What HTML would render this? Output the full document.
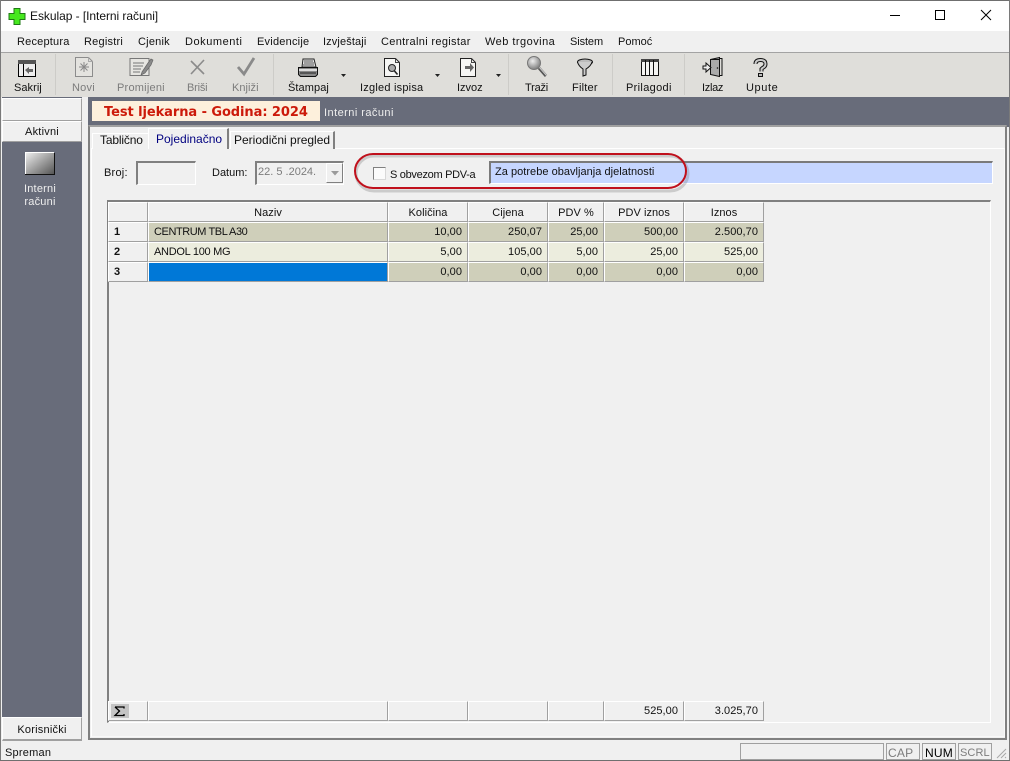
<!DOCTYPE html>
<html><head><meta charset="utf-8"><style>
html,body{margin:0;padding:0;background:#f0f0f0}
#w{position:relative;width:1010px;height:761px;overflow:hidden;font:11px/14px "Liberation Sans",sans-serif;color:#000;background:#f0f0f0}
#w div{position:absolute;box-sizing:border-box}
.t{position:absolute;white-space:nowrap;letter-spacing:.22px;color:#111}
.g{color:#7c7c7c}
.c{text-align:center}
.cell{position:absolute;box-sizing:border-box;height:20px;border-right:1px solid #a0a0a0;border-bottom:1px solid #a0a0a0;border-left:1px solid #fff;border-top:1px solid #fff;padding:0 5px;line-height:19px;white-space:nowrap;letter-spacing:.05px;color:#111}
.r{text-align:right}
.h{text-align:center;background:#f0f0f0;line-height:20px}
.y{background:#cfcfba}.l{background:#ecedde}.b{background:#0078d7}
svg{position:absolute;left:0;top:0}
</style></head><body><div id="w">
<div style="left:0;top:1px;width:1010px;height:30px;background:#fff"></div>
<div style="left:0;top:31px;width:1010px;height:21px;background:#f0f0f0"></div>
<div style="left:0;top:52px;width:1010px;height:1px;background:#a3a3a3"></div>
<div style="left:0;top:53px;width:1010px;height:44px;background:#dfdeda"></div>
<div style="left:88px;top:97px;width:922px;height:30px;background:#686c7a"></div>
<div style="left:2px;top:97px;width:80px;height:644px;background:#686c7a"></div>
<div style="left:2px;top:98px;width:80px;height:23px;background:#f0f0f0;border:1px solid #fff;border-right-color:#a0a0a0;border-bottom-color:#a0a0a0"></div>
<div style="left:2px;top:121px;width:80px;height:21px;background:#f0f0f0;border:1px solid #fff;border-right-color:#a0a0a0;border-bottom-color:#a0a0a0"></div>
<div style="left:2px;top:717px;width:80px;height:24px;background:#f0f0f0;border:1px solid #fff;border-right-color:#a0a0a0;border-bottom:2px solid #a0a0a0"></div>
<div style="left:92px;top:101px;width:228px;height:20px;background:#fdf0dc"></div>
<div style="left:88px;top:125px;width:919px;height:615px;background:#f0f0f0;border:2px solid #808080;border-top-color:#a0a0a0"></div>
<div style="left:91px;top:148px;width:914px;height:589px;border:1px solid #fff;border-right-color:#f8f8f8;border-bottom-color:#f8f8f8"></div>
<div style="left:92px;top:133px;width:56px;height:16px;background:#f0f0f0;border:1px solid #fff;border-right:0;border-bottom:0"></div>
<div style="left:148px;top:128px;width:81px;height:21px;background:#f0f0f0;border:1px solid #fff;border-right:2px solid #808080;border-bottom:0"></div>
<div style="left:230px;top:131px;width:105px;height:18px;background:#f0f0f0;border:1px solid #fff;border-right:2px solid #808080;border-bottom:0"></div>

<div style="left:136px;top:161px;width:60px;height:24px;background:#f0f0f0;border:2px solid #808080;border-right:1px solid #fff;border-bottom:1px solid #fff"></div>
<div style="left:255px;top:161px;width:89px;height:24px;background:#f0f0f0;border:2px solid #808080;border-right:1px solid #fff;border-bottom:1px solid #fff"></div>
<div style="left:326px;top:163px;width:17px;height:20px;background:#f0f0f0;border:1px solid #fff;border-right-color:#808080;border-bottom-color:#808080"></div>
<div style="left:373px;top:167px;width:13px;height:13px;background:#fbfbfb;border:1px solid #808080;border-right-color:#d8d8d8;border-bottom-color:#d8d8d8"></div>
<div style="left:489px;top:161px;width:504px;height:23px;background:#c6d6ff;border:2px solid #7a7a7a;border-right:1px solid #fff;border-bottom:1px solid #fff"></div>

<div style="left:107px;top:200px;width:884px;height:523px;background:#f0f0f0;border:2px solid #808080;border-right:1px solid #fff;border-bottom:1px solid #fff"></div>

<div class="cell h" style="left:108px;top:202px;width:40px"></div>
<div class="cell h" style="left:148px;top:202px;width:240px">Naziv</div>
<div class="cell h" style="left:388px;top:202px;width:80px">Količina</div>
<div class="cell h" style="left:468px;top:202px;width:80px">Cijena</div>
<div class="cell h" style="left:548px;top:202px;width:56px">PDV %</div>
<div class="cell h" style="left:604px;top:202px;width:80px">PDV iznos</div>
<div class="cell h" style="left:684px;top:202px;width:80px">Iznos</div>

<div class="cell" style="left:108px;top:222px;width:40px;font-weight:bold;background:#f0f0f0">1</div>
<div class="cell y" style="left:148px;top:222px;width:240px;letter-spacing:-.42px">CENTRUM TBL A30</div>
<div class="cell y r" style="left:388px;top:222px;width:80px">10,00</div>
<div class="cell y r" style="left:468px;top:222px;width:80px">250,07</div>
<div class="cell y r" style="left:548px;top:222px;width:56px">25,00</div>
<div class="cell y r" style="left:604px;top:222px;width:80px">500,00</div>
<div class="cell y r" style="left:684px;top:222px;width:80px">2.500,70</div>

<div class="cell" style="left:108px;top:242px;width:40px;font-weight:bold;background:#f0f0f0">2</div>
<div class="cell l" style="left:148px;top:242px;width:240px;letter-spacing:-.28px">ANDOL 100 MG</div>
<div class="cell l r" style="left:388px;top:242px;width:80px">5,00</div>
<div class="cell l r" style="left:468px;top:242px;width:80px">105,00</div>
<div class="cell l r" style="left:548px;top:242px;width:56px">5,00</div>
<div class="cell l r" style="left:604px;top:242px;width:80px">25,00</div>
<div class="cell l r" style="left:684px;top:242px;width:80px">525,00</div>

<div class="cell" style="left:108px;top:262px;width:40px;font-weight:bold;background:#f0f0f0">3</div>
<div class="cell b" style="left:148px;top:262px;width:240px"></div>
<div class="cell y r" style="left:388px;top:262px;width:80px">0,00</div>
<div class="cell y r" style="left:468px;top:262px;width:80px">0,00</div>
<div class="cell y r" style="left:548px;top:262px;width:56px">0,00</div>
<div class="cell y r" style="left:604px;top:262px;width:80px">0,00</div>
<div class="cell y r" style="left:684px;top:262px;width:80px">0,00</div>

<div class="cell h" style="left:108px;top:701px;width:40px"></div>
<div class="cell h" style="left:148px;top:701px;width:240px"></div>
<div class="cell h" style="left:388px;top:701px;width:80px"></div>
<div class="cell h" style="left:468px;top:701px;width:80px"></div>
<div class="cell h" style="left:548px;top:701px;width:56px"></div>
<div class="cell r" style="left:604px;top:701px;width:80px;background:#f0f0f0">525,00</div>
<div class="cell r" style="left:684px;top:701px;width:80px;background:#f0f0f0">3.025,70</div>
<div style="left:111px;top:704px;width:18px;height:14px;background:#c4c4c4"></div>

<div style="left:740px;top:743px;width:144px;height:17px;border:1px solid #a0a0a0"></div>
<div style="left:886px;top:743px;width:34px;height:17px;border:1px solid #a0a0a0"></div>
<div style="left:922px;top:743px;width:34px;height:17px;border:1px solid #a0a0a0"></div>
<div style="left:958px;top:743px;width:34px;height:17px;border:1px solid #a0a0a0"></div>

<svg width="1010" height="761" viewBox="0 0 1010 761" fill="none">
<defs>
<linearGradient id="bg" x1="0" y1="0" x2="1" y2="1"><stop offset="0" stop-color="#f2f2f2"/><stop offset="1" stop-color="#555"/></linearGradient>
<radialGradient id="lens" cx=".4" cy=".35" r=".7"><stop offset="0" stop-color="#eee"/><stop offset="1" stop-color="#777"/></radialGradient>
</defs>
<rect x="0" y="0" width="1010" height="1" fill="#6f6f6f"/>
<rect x="0" y="0" width="1" height="761" fill="#7a7a7a"/>
<rect x="1009" y="0" width="1" height="761" fill="#7a7a7a"/>
<rect x="0" y="760" width="1010" height="1" fill="#6f6f6f"/>
<path d="M14 8.500h6v5h5v6h-5v5h-6v-5h-5v-6h5z" fill="#46e81e" stroke="#1f7a14"/>
<path d="M890 15.500h10" stroke="#000"/>
<rect x="935.500" y="10.500" width="9" height="9" stroke="#000"/>
<path d="M981 10l10 10M991 10l-10 10" stroke="#000"/>
<g fill="#cdccc8"><rect x="55" y="54" width="1" height="41"/><rect x="273" y="54" width="1" height="41"/><rect x="508" y="54" width="1" height="41"/><rect x="612" y="54" width="1" height="41"/><rect x="684" y="54" width="1" height="41"/></g>
<g fill="#222"><path d="M341 74h5l-2.500 3z"/><path d="M435 74h5l-2.500 3z"/><path d="M496 74h5l-2.500 3z"/></g>
<g shape-rendering="crispEdges"><rect x="18.500" y="60.500" width="17" height="16" fill="#eee" stroke="#000"/><rect x="18" y="60" width="18" height="4" fill="#555"/><rect x="23" y="64" width="1" height="12" fill="#000"/></g>
<path d="M25 70l4-3v2h4v3h-4v2z" fill="#666"/>
<path d="M75.500 57.500h13l4 4v15h-17z" fill="#e4e3df" stroke="#8c8c8c"/><path d="M88.500 57.500v4h4" stroke="#aaa"/>
<path d="M84 62v10M79 67h10M80.500 63.500l7 7M87.500 63.500l-7 7" stroke="#8a8a8a"/>
<rect x="130" y="58.500" width="19" height="17" fill="#e6e5e1" stroke="#777"/>
<path d="M133 63h11M133 66h10M133 69h8M133 72h7" stroke="#777"/>
<path d="M142 72l6-9 3-4 2 1-2 5-6 8-4 2z" fill="#8a8a8a" stroke="#666" stroke-width=".7"/>
<path d="M191 61l13 13M204 60l-13 14" stroke="#8b8b8b" stroke-width="1.600"/>
<path d="M238 67l6 7 10-16" stroke="#8a8a8a" stroke-width="2.800"/>
<path d="M303 59h11l2 8h-14z" fill="#e6e6e6" stroke="#222"/>
<path d="M304 61h9M304 63h10M303 65h11" stroke="#555"/>
<path d="M298.500 67.500h19v7l-2 2h-15l-2-2z" fill="#8a8a8a" stroke="#111"/>
<path d="M299 70h18" stroke="#ddd" stroke-width="2"/><path d="M300 73h16" stroke="#222"/>
<path d="M384.500 58.500h11l4 4v14h-15z" fill="#f6f6f4" stroke="#222"/><path d="M395.500 58.500v4h4" stroke="#444"/>
<circle cx="392" cy="68" r="3.500" fill="#aaa" stroke="#222"/><path d="M394.500 71l3 3.500" stroke="#222" stroke-width="1.600"/>
<path d="M460.500 58.500h11l4 4v14h-15z" fill="#f6f6f4" stroke="#222"/><path d="M471.500 58.500v4h4" stroke="#444"/>
<path d="M465 66h5v-3l4 4.500-4 4.500v-3h-5z" fill="#666"/>
<circle cx="534" cy="63" r="6.500" fill="url(#lens)" stroke="#777"/><path d="M539 68l7 8" stroke="#555" stroke-width="3"/><path d="M539.500 67.500l7 8" stroke="#ccc" stroke-width="1"/>
<ellipse cx="585" cy="62" rx="7.500" ry="3" fill="#bbb" stroke="#111"/><path d="M577.500 62q1 4 5.500 7v7l3-1v-6q5-3 6-7" fill="#ccc" stroke="#111"/>
<g shape-rendering="crispEdges"><rect x="641.500" y="59.500" width="17" height="16" fill="#f4f4f2" stroke="#111"/><rect x="641" y="59" width="18" height="3" fill="#444"/><path d="M645.500 60v15M649.500 60v15M653.500 60v15" stroke="#111"/></g>
<path d="M710.500 59.500l9-2v19l-9-2z" fill="#aaa" stroke="#111"/>
<path d="M719.500 58.500h2.500v17h-2.500M710.500 59.500h9" stroke="#111" fill="none"/>
<path d="M703 66h3v-3l5 4.500-5 4.500v-3h-3z" fill="#eee" stroke="#111"/>
<circle cx="717.500" cy="68" r=".8" fill="#111"/>
<path d="M755.500 64q0-4 5-4t5 4q0 2.500-3 4l-1 1v2.500" stroke="#111" stroke-width="4"/>
<path d="M755.500 64q0-4 5-4t5 4q0 2.500-3 4l-1 1v2.500" stroke="#c9c9c9" stroke-width="2"/>
<rect x="758.500" y="73.500" width="4" height="3" fill="#bbb" stroke="#111"/>
<rect x="25" y="153" width="30" height="22" fill="#111"/><rect x="25" y="152" width="29" height="22" fill="url(#bg)"/><rect x="25" y="152" width="29" height="1" fill="#fff"/><rect x="25" y="152" width="1" height="22" fill="#fff"/>
<path d="M331 171h8l-4 4.500z" fill="#9a9a9a"/>
<rect x="356" y="156" width="332" height="35" rx="18" stroke="#777" stroke-width="3" opacity=".3"/>
<rect x="355" y="154" width="331" height="34" rx="18" stroke="#c0101c" stroke-width="2"/>
<path d="M1006 749l-9 9M1006 753l-5 5M1006 757l-1 1" stroke="#a8a8a8"/>
<path d="M115 707h9v1.500M115 707l4.500 4-4.500 4.500h9v-1.500" stroke="#000" stroke-width="1.300"/>
</svg>

<span class="t" style="left:30px;top:9px;font-size:12px;letter-spacing:-.05px">Eskulap - [Interni računi]</span>
<span class="t" style="left:17px;top:35px;letter-spacing:.2px">Receptura</span>
<span class="t" style="left:84px;top:35px">Registri</span>
<span class="t" style="left:138px;top:35px">Cjenik</span>
<span class="t" style="left:185px;top:35px;letter-spacing:.55px">Dokumenti</span>
<span class="t" style="left:257px;top:35px">Evidencije</span>
<span class="t" style="left:323px;top:35px;letter-spacing:.12px">Izvještaji</span>
<span class="t" style="left:381px;top:35px;letter-spacing:.33px">Centralni registar</span>
<span class="t" style="left:485px;top:35px;letter-spacing:.47px">Web trgovina</span>
<span class="t" style="left:570px;top:35px;letter-spacing:-.1px">Sistem</span>
<span class="t" style="left:618px;top:35px;letter-spacing:0">Pomoć</span>

<span class="t" style="left:14px;top:81px;letter-spacing:.05px">Sakrij</span>
<span class="t g" style="left:72px;top:81px">Novi</span>
<span class="t g" style="left:117px;top:81px">Promijeni</span>
<span class="t g" style="left:187px;top:81px;letter-spacing:-.2px">Briši</span>
<span class="t g" style="left:232px;top:81px;letter-spacing:.05px">Knjiži</span>
<span class="t" style="left:288px;top:81px;letter-spacing:.08px">Štampaj</span>
<span class="t" style="left:360px;top:81px">Izgled ispisa</span>
<span class="t" style="left:457px;top:81px;letter-spacing:0">Izvoz</span>
<span class="t" style="left:525px;top:81px;letter-spacing:-.2px">Traži</span>
<span class="t" style="left:572px;top:81px">Filter</span>
<span class="t" style="left:626px;top:81px;letter-spacing:.33px">Prilagodi</span>
<span class="t" style="left:702px;top:81px;letter-spacing:-.3px">Izlaz</span>
<span class="t" style="left:746px;top:81px;letter-spacing:.6px">Upute</span>

<span class="t" style="left:104px;top:104px;font:bold 13px/17px 'DejaVu Sans',sans-serif;letter-spacing:-.07px;color:#cc1a0a">Test ljekarna - Godina: 2024</span>
<span class="t" style="left:324px;top:106px;letter-spacing:.45px;color:#eee">Interni računi</span>
<span class="t c" style="left:2px;top:125px;width:80px">Aktivni</span>
<span class="t c" style="left:2px;top:182px;width:76px;color:#eee">Interni</span>
<span class="t c" style="left:2px;top:195px;width:76px;color:#eee">računi</span>
<span class="t c" style="left:2px;top:723px;width:80px">Korisnički</span>

<span class="t" style="left:100px;top:133px;font-size:12px;letter-spacing:-.15px">Tablično</span>
<span class="t" style="left:156px;top:132px;font-size:12px;letter-spacing:0;color:#000080">Pojedinačno</span>
<span class="t" style="left:234px;top:133px;font-size:12px;letter-spacing:0">Periodični pregled</span>

<span class="t" style="left:104px;top:166px">Broj:</span>
<span class="t" style="left:212px;top:166px;letter-spacing:0">Datum:</span>
<span class="t g" style="left:258px;top:165px;letter-spacing:0">22. 5 .2024.</span>
<span class="t" style="left:390px;top:168px;letter-spacing:-.3px">S obvezom PDV-a</span>
<span class="t" style="left:495px;top:165px;letter-spacing:.03px">Za potrebe obavljanja djelatnosti</span>

<span class="t" style="left:5px;top:746px">Spreman</span>
<span class="t g" style="left:888px;top:746px;font-size:12px">CAP</span>
<span class="t" style="left:925px;top:746px;font-size:12px;color:#000">NUM</span>
<span class="t g" style="left:960px;top:746px;letter-spacing:.1px">SCRL</span>
</div></body></html>
